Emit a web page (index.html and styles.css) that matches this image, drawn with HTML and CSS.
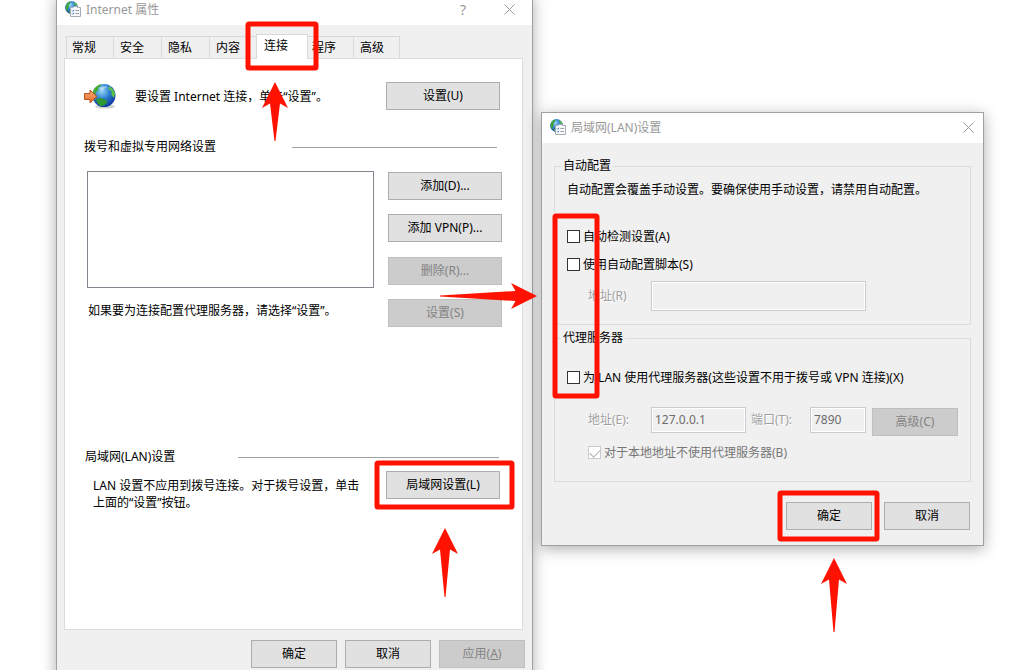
FILE: index.html
```html
<!DOCTYPE html>
<html lang="zh-CN">
<head>
  <meta charset="UTF-8">
  <meta name="viewport" content="width=device-width, initial-scale=1">
  <title>Internet 属性</title>
  <link rel="stylesheet" href="styles.css">
</head>
<body>
  <svg class="defs" aria-hidden="true">
    <defs>
      <radialGradient id="sea" cx="40%" cy="30%" r="75%">
        <stop offset="0" stop-color="#9bd8f8"/>
        <stop offset="0.45" stop-color="#2f83cf"/>
        <stop offset="1" stop-color="#0b2f9c"/>
      </radialGradient>
      <linearGradient id="orange" x1="0" y1="0" x2="0" y2="1">
        <stop offset="0" stop-color="#f9b075"/>
        <stop offset="1" stop-color="#e0682a"/>
      </linearGradient>
      <symbol id="icon-options" viewBox="0 0 16 16">
        <circle cx="6.500" cy="6.500" r="6.400" fill="url(#sea)"/>
        <path d="M1 4Q3 1 5 .6L5.500 2 3.500 4 4 6 2.500 7.500 3 10 1.500 9.500Q0 7 1 4Z" fill="#3fa535"/>
        <path d="M9 1Q12 2 12.500 5L11 5 9.500 3.500Z" fill="#58b947"/>
        <path d="M3 10.500L6 10 6.500 12.800Q4 12.500 3 10.500Z" fill="#3fa535"/>
        <path d="M5.500 6.500H8L9 5.500H12L12.500 6.500H15.500V15.500H5.500Z" fill="#f7f9fb" stroke="#a5adb4"/>
        <path d="M7 9.500L7.800 10.300 9 8.800M7 12.500L7.800 13.300 9 11.800" fill="none" stroke="#3f7fb5"/>
        <path d="M10.300 9.500H14M10.300 12.500H14" stroke="#98a2aa"/>
      </symbol>
    </defs>
  </svg>

  <main class="desktop">
    <section class="window props" aria-label="Internet 属性">
      <header class="titlebar">
        <svg class="app-icon"><use href="#icon-options"/></svg>
        <h1>Internet 属性</h1>
        <button class="caption help" aria-label="帮助">?</button>
        <button class="caption" aria-label="关闭">
          <svg class="close" viewBox="0 0 11 11"><path d="M.5 .5L10.500 10.500M10.500 .5L.5 10.500"/></svg>
        </button>
      </header>

      <nav class="tabs" role="tablist">
        <button class="tab" role="tab">常规</button>
        <button class="tab" role="tab">安全</button>
        <button class="tab" role="tab">隐私</button>
        <button class="tab" role="tab">内容</button>
        <button class="tab active" role="tab" aria-selected="true">连接</button>
        <button class="tab" role="tab">程序</button>
        <button class="tab" role="tab">高级</button>
      </nav>

      <div class="panel">
        <div class="setup">
          <svg class="globe" viewBox="0 0 32 26">
            <ellipse cx="21" cy="23.500" rx="10" ry="2" fill="#000" opacity=".18"/>
            <circle cx="20" cy="12.500" r="11.500" fill="url(#sea)"/>
            <path d="M10 6Q13 1.500 17 1.400L17 3 14 5 14.500 7 12 9 11 12 8.800 11Q8.800 8 10 6Z" fill="#45ab36"/>
            <path d="M25 3Q30 6 31 11L30 15 27.500 12 27.500 8 24.500 6Z" fill="#5cc245"/>
            <path d="M12 16L17 15 22 17 23.500 19.500 20 22.500 17 23.200Q13 21 12 16Z" fill="#2f9830"/>
            <path d="M15 5Q19 2 24 4 20 5 18 8Z" fill="#fff" opacity=".4"/>
            <path d="M.5 10.500H6V7L13 13.500 6 20V16.500H.5Z" fill="url(#orange)" stroke="#b9501d"/>
          </svg>
          <p>要设置 Internet 连接，单击“设置”。</p>
          <button class="btn wide">设置(U)</button>
        </div>

        <h2 class="group-title dial">拨号和虚拟专用网络设置</h2>
        <div class="dialup">
          <div class="connections">
            <select class="list" size="6" aria-label="拨号和虚拟专用网络设置"></select>
            <p>如果要为连接配置代理服务器，请选择“设置”。</p>
          </div>
          <div class="actions">
            <button class="btn wide">添加(D)...</button>
            <button class="btn wide">添加 VPN(P)...</button>
            <button class="btn wide" disabled>删除(R)...</button>
            <button class="btn wide" disabled>设置(S)</button>
          </div>
        </div>

        <h2 class="group-title lan">局域网(LAN)设置</h2>
        <div class="lan-row">
          <p>LAN 设置不应用到拨号连接。对于拨号设置，单击上面的“设置”按钮。</p>
          <button class="btn wide">局域网设置(L)</button>
        </div>
      </div>

      <footer class="buttons">
        <button class="btn">确定</button>
        <button class="btn">取消</button>
        <button class="btn" disabled>应用(<u>A</u>)</button>
      </footer>
    </section>

    <section class="window lan-dialog" aria-label="局域网(LAN)设置">
      <header class="titlebar">
        <svg class="app-icon"><use href="#icon-options"/></svg>
        <h1>局域网(LAN)设置</h1>
        <button class="caption" aria-label="关闭">
          <svg class="close" viewBox="0 0 11 11"><path d="M.5 .5L10.500 10.500M10.500 .5L.5 10.500"/></svg>
        </button>
      </header>

      <form class="lan-form">
        <fieldset class="auto">
          <legend>自动配置</legend>
          <p>自动配置会覆盖手动设置。要确保使用手动设置，请禁用自动配置。</p>
          <label class="check detect"><input type="checkbox">自动检测设置(A)</label>
          <label class="check script"><input type="checkbox">使用自动配置脚本(S)</label>
          <div class="fields">
            <label class="dim" for="scriptUrl">地址(R)</label>
            <input class="text url" id="scriptUrl" type="text" disabled>
          </div>
        </fieldset>

        <fieldset class="proxy">
          <legend>代理服务器</legend>
          <label class="check use-proxy"><input type="checkbox">为 LAN 使用代理服务器(这些设置不用于拨号或 VPN 连接)(X)</label>
          <div class="fields">
            <label class="dim" for="host">地址(E):</label>
            <input class="text host" id="host" type="text" value="127.0.0.1" disabled>
            <label class="dim port-label" for="port">端口(T):</label>
            <input class="text port" id="port" type="text" value="7890" disabled>
            <button class="btn" type="button" disabled>高级(C)</button>
          </div>
          <label class="check bypass"><input type="checkbox" checked disabled>对于本地地址不使用代理服务器(B)</label>
        </fieldset>

        <div class="buttons">
          <button class="btn" type="button">确定</button>
          <button class="btn" type="button">取消</button>
        </div>
      </form>
    </section>

    <!-- step markers over both windows -->
    <svg class="marks" viewBox="0 0 1020 670" aria-hidden="true">
      <g class="frames">
        <rect x="248" y="24" width="68" height="44" rx="1"/>
        <rect x="555" y="216" width="42" height="180" rx="1"/>
        <rect x="377" y="463" width="135" height="44" rx="1"/>
        <rect x="780" y="493" width="97" height="46" rx="1"/>
      </g>
      <g class="arrows">
        <path d="M275 82L288 108 280 103.500 275.500 141H274.500L270 103.500 262 108Z"/>
        <path d="M445 528L458 554 450 549.500 445.500 597H444.500L440 549.500 432 554Z"/>
        <path d="M834 558L847 584 839 579.500 834.500 632H833.500L829 579.500 821 584Z"/>
        <path d="M537 296L511 309 515.500 301 440 296.500V295.500L515.500 291 511 283Z"/>
      </g>
    </svg>
  </main>
</body>
</html>
```

FILE: styles.css
```css
* {
  box-sizing: border-box;
}
body {
  margin: 0;
  background: #fff;
  color: #000;
  font: 12px/16px "Noto Sans", "Noto Sans CJK SC", sans-serif;
}
h1, h2, p {
  margin: 0;
  font-size: 12px;
  font-weight: normal;
}
button, input, select {
  font: inherit;
  color: inherit;
}
.defs {
  position: absolute;
  width: 0;
  height: 0;
}
.desktop {
  position: relative;
  min-height: 100vh;
  overflow: hidden;
}

/* windows */
.window {
  position: absolute;
  background: #f0f0f0;
  border: 1px solid #a0a0a0;
  box-shadow: 0 3px 14px rgba(0,0,0,0.32);
}
.props {
  left: 56px;
  top: -6px;
  width: 477px;
}
.lan-dialog {
  left: 541px;
  top: 112px;
  width: 443px;
}
.titlebar {
  display: flex;
  align-items: center;
  height: 30px;
  padding-left: 8px;
  background: #fff;
  color: #999;
}
.titlebar h1 {
  flex: 1;
  margin-left: 5px;
}
.app-icon {
  width: 16px;
  height: 16px;
  margin-bottom: 2px;
}
.caption {
  width: 46px;
  height: 28px;
  padding: 0;
  border: 0;
  background: none;
  text-align: center;
}
.lan-dialog .caption {
  width: 30px;
}
.help {
  font-size: 14px;
}
.close {
  display: block;
  width: 11px;
  height: 11px;
  margin: 0 auto 2px;
  stroke: #999;
}

/* buttons */
.btn {
  width: 86px;
  height: 28px;
  padding: 0;
  border: 1px solid #adadad;
  background: #e1e1e1;
}
.btn:disabled {
  border-color: #bfbfbf;
  background: #ccc;
  color: #838383;
}
.wide {
  width: 114px;
}
.buttons {
  display: flex;
  justify-content: flex-end;
}
.props .buttons {
  gap: 8px;
  padding: 10px 7px 12px;
}
.lan-form .buttons {
  gap: 12px;
  margin-top: 20px;
}

/* tabs */
.tabs {
  display: flex;
  align-items: flex-end;
  height: 33px;
  padding-left: 9px;
}
.tab {
  width: 48px;
  height: 22px;
  padding: 0 0 0 6px;
  border: solid #d9d9d9;
  border-width: 1px 1px 0 0;
  background: #f0f0f0;
  text-align: left;
}
.tab:first-child {
  border-left-width: 1px;
  padding-left: 5px;
}
.tab:last-child {
  width: 46px;
}
.tab.active {
  z-index: 1;
  width: 52px;
  height: 25px;
  margin: 0 -2px -1px;
  padding: 0 0 2px 7px;
  border-left-width: 1px;
  background: #fff;
}
.panel {
  margin: 0 9px 0 7px;
  padding: 23px 20px 118px 19px;
  border: 1px solid #dcdcdc;
  background: #fff;
}
.setup {
  display: flex;
  align-items: center;
  padding-right: 2px;
}
.setup p {
  flex: 1;
  padding-top: 2px;
}
.globe {
  width: 32px;
  height: 26px;
  margin-right: 19px;
}
.group-title {
  display: flex;
  align-items: center;
  justify-content: space-between;
}
.group-title::after {
  content: "";
  height: 1px;
  background: #a0a0a0;
}
.dial {
  margin: 29px 5px 16px 0;
}
.dial::after {
  width: 205px;
}
.dialup {
  display: flex;
  justify-content: space-between;
  padding-left: 3px;
}
.connections {
  width: 287px;
}
.connections p {
  margin: 15px 0 0 1px;
}
.list {
  display: block;
  width: 100%;
  height: 117px;
  border: 1px solid #828790;
  border-radius: 0;
  background: #fff;
}
.actions {
  display: grid;
  align-content: space-between;
  height: 156px;
  padding-top: 1px;
}
.lan {
  margin: 122px 3px 6px 1px;
}
.lan::after {
  width: 261px;
}
.lan-row {
  display: flex;
  justify-content: space-between;
  padding: 0 2px 0 9px;
}
.lan-row p {
  width: 274px;
  padding-top: 6px;
  line-height: 17px;
}

/* LAN dialog */
.lan-form {
  padding: 15px 13px 15px 12px;
}
fieldset {
  margin: 0 -1px 0 0;
  border: 1px solid #dcdcdc;
}
legend {
  margin-left: -6px;
  padding: 0 2px;
}
.auto {
  padding: 8px 12px 13px;
}
.proxy {
  margin-top: 5px;
  padding: 24px 12px 21px;
}
.check {
  display: flex;
  align-items: center;
  gap: 3px;
}
.check input {
  appearance: none;
  width: 13px;
  height: 13px;
  margin: 0 0 1px;
  border: 1px solid #333;
  background: #fff;
}
.check input:disabled {
  border-color: #ccc;
}
.check input:checked::before {
  content: "";
  display: block;
  width: 9px;
  height: 5px;
  margin: 2px 1px;
  border: solid #b0b0b0;
  border-width: 0 0 1px 1px;
  transform: rotate(-45deg);
}
.detect {
  margin-top: 31px;
}
.script {
  margin-top: 12px;
}
.bypass {
  margin: 9px 0 0 21px;
  color: #777;
}
.fields {
  display: flex;
  align-items: flex-start;
  padding-left: 21px;
}
.auto .fields {
  align-items: center;
  margin-top: 8px;
}
.proxy .fields {
  margin-top: 21px;
}
.dim {
  width: 63px;
  color: #a0a0a0;
  text-shadow: 1px 1px #fff;
}
.proxy .dim {
  line-height: 26px;
}
.proxy .port-label {
  width: 59px;
  margin-left: 5px;
}
.text {
  height: 26px;
  padding: 0 3px 2px;
  border: 1px solid #ccc;
  background: #f0f0f0;
  box-shadow: inset 0 0 0 1px #fff;
  color: #6d6d6d;
}
.url {
  width: 215px;
  height: 30px;
}
.host {
  width: 95px;
}
.port {
  width: 56px;
}
.proxy .btn {
  margin: 1px 0 0 6px;
}
.proxy {
  padding-bottom: 20px;
}

/* red step markers */
.marks {
  position: absolute;
  left: 0;
  top: 0;
  width: 1020px;
  height: 670px;
  pointer-events: none;
}
.frames {
  fill: none;
  stroke: #ff1200;
  stroke-width: 5px;
}
.arrows {
  fill: #ff1200;
}
```
